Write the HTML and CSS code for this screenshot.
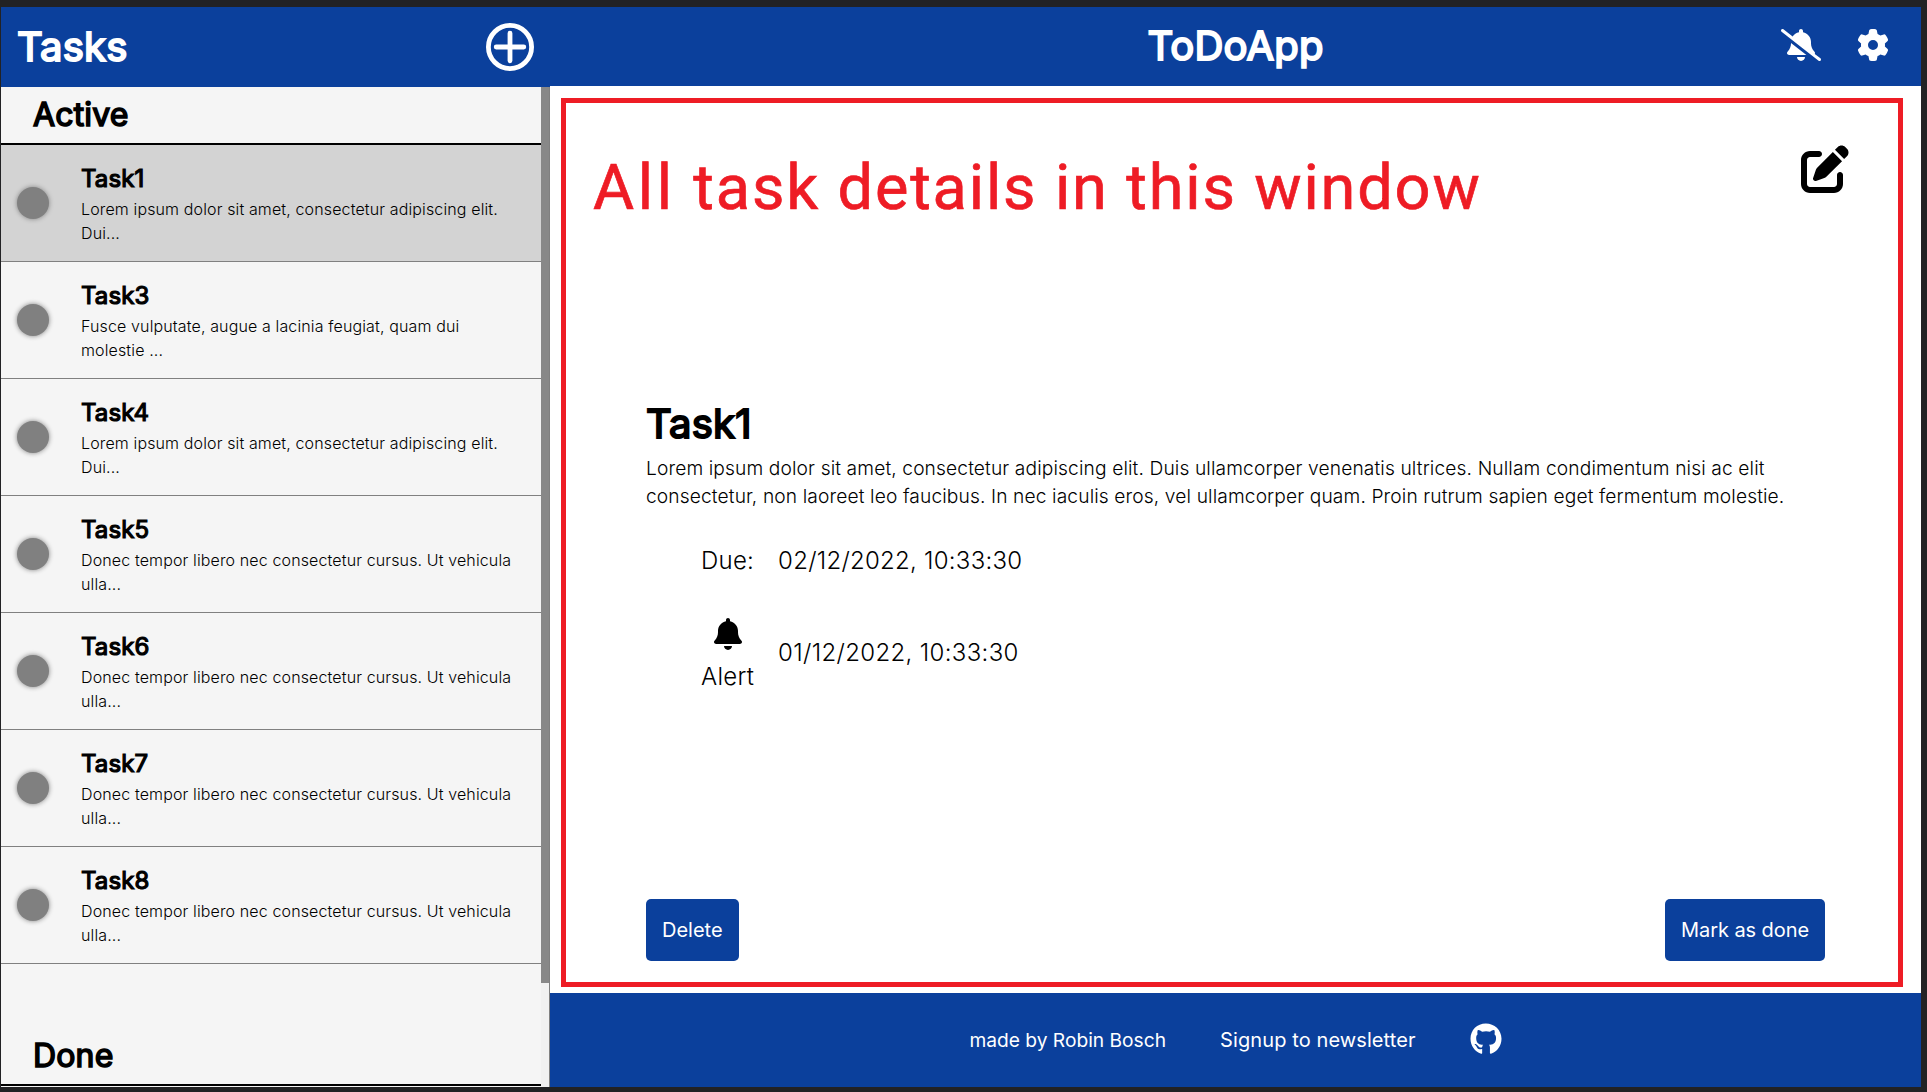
FILE: index.html
```
<!DOCTYPE html>
<html lang="en">
<head>
<meta charset="utf-8">
<title>ToDoApp</title>
<link rel="stylesheet" href="styles.css">
</head>
<body>
<div class="app">
  <aside class="sidebar">
    <header class="sidebar-header">
      <h1 class="title">Tasks</h1>
      <svg class="add" viewBox="0 0 48 48"><circle cx="24" cy="24" r="21.6"/><path d="M24 10.2v27.6M10.2 24h27.6"/></svg>
    </header>
    <div class="sidebar-body">
      <div class="lists">
        <h2 class="group">Active</h2>
        <div class="task selected"><i class="dot"></i><div class="info"><h3>Task1</h3><p>Lorem ipsum dolor sit amet, consectetur adipiscing elit. Dui...</p></div></div>
        <div class="task"><i class="dot"></i><div class="info"><h3>Task3</h3><p>Fusce vulputate, augue a lacinia feugiat, quam dui molestie ...</p></div></div>
        <div class="task"><i class="dot"></i><div class="info"><h3>Task4</h3><p>Lorem ipsum dolor sit amet, consectetur adipiscing elit. Dui...</p></div></div>
        <div class="task"><i class="dot"></i><div class="info"><h3>Task5</h3><p>Donec tempor libero nec consectetur cursus. Ut vehicula ulla...</p></div></div>
        <div class="task"><i class="dot"></i><div class="info"><h3>Task6</h3><p>Donec tempor libero nec consectetur cursus. Ut vehicula ulla...</p></div></div>
        <div class="task"><i class="dot"></i><div class="info"><h3>Task7</h3><p>Donec tempor libero nec consectetur cursus. Ut vehicula ulla...</p></div></div>
        <div class="task"><i class="dot"></i><div class="info"><h3>Task8</h3><p>Donec tempor libero nec consectetur cursus. Ut vehicula ulla...</p></div></div>
        <h2 class="group done">Done</h2>
      </div>
      <div class="scrollbar"><div class="thumb"></div></div>
    </div>
  </aside>
  <main class="main">
    <header class="topbar">
      <h1 class="title">ToDoApp</h1>
      <div class="actions">
        <svg width="40" height="32" viewBox="0 0 640 512"><path d="M38.8 5.1C28.4-3.1 13.3-1.2 5.1 9.2S-1.2 34.7 9.2 42.9l592 464c10.4 8.2 25.5 6.3 33.7-4.1s6.3-25.5-4.1-33.7l-90.2-70.7c.2-.4 .4-.9 .6-1.3c5.2-11.5 3.1-25-5.3-34.4l-7.4-8.3C497.3 319.2 480 273.9 480 226.8V208c0-77.4-55-142-128-156.8V32c0-17.7-14.3-32-32-32s-32 14.3-32 32V51.2c-42.6 8.6-79 34.2-102 69.3L38.8 5.1zM406.2 416L160 222.1v4.8c0 47-17.3 92.4-48.5 127.6l-7.4 8.3c-8.4 9.4-10.4 22.9-5.3 34.4S115.4 416 128 416H406.2zm-40.9 77.3c12-12 18.7-28.3 18.7-45.3H320 256c0 17 6.7 33.3 18.7 45.3s28.3 18.7 45.3 18.7s33.3-6.7 45.3-18.7z"/></svg>
        <svg width="32" height="32" viewBox="0 0 512 512"><path d="M495.9 166.6c3.2 8.7 .5 18.4-6.4 24.6l-43.3 39.4c1.1 8.3 1.7 16.8 1.7 25.4s-.6 17.1-1.7 25.4l43.3 39.4c6.9 6.2 9.6 15.9 6.4 24.6c-4.4 11.9-9.7 23.3-15.8 34.3l-4.7 8.1c-6.6 11-14 21.4-22.1 31.2c-5.9 7.2-15.7 9.6-24.5 6.8l-55.7-17.7c-13.4 10.3-28.2 18.9-44 25.4l-12.5 57.1c-2 9.1-9 16.3-18.2 17.8c-13.8 2.3-28 3.5-42.5 3.5s-28.7-1.2-42.5-3.5c-9.2-1.5-16.2-8.7-18.2-17.8l-12.5-57.1c-15.8-6.5-30.6-15.1-44-25.4L83.1 425.9c-8.8 2.8-18.6 .3-24.5-6.8c-8.1-9.8-15.5-20.2-22.1-31.2l-4.7-8.1c-6.1-11-11.4-22.4-15.8-34.3c-3.2-8.7-.5-18.4 6.4-24.6l43.3-39.4C64.6 273.1 64 264.6 64 256s.6-17.1 1.7-25.4L22.4 191.2c-6.9-6.2-9.6-15.9-6.4-24.6c4.4-11.9 9.7-23.3 15.8-34.3l4.7-8.1c6.6-11 14-21.4 22.1-31.2c5.9-7.2 15.7-9.6 24.5-6.8l55.7 17.7c13.4-10.3 28.2-18.9 44-25.4l12.5-57.1c2-9.1 9-16.3 18.2-17.8C227.3 1.2 241.5 0 256 0s28.7 1.2 42.5 3.5c9.2 1.5 16.2 8.7 18.2 17.8l12.5 57.1c15.8 6.5 30.6 15.1 44 25.4l55.7-17.7c8.8-2.8 18.6-.3 24.5 6.8c8.1 9.8 15.5 20.2 22.1 31.2l4.7 8.1c6.1 11 11.4 22.4 15.8 34.3zM256 336a80 80 0 1 0 0-160 80 80 0 1 0 0 160z"/></svg>
      </div>
    </header>
    <section class="stage">
      <div class="panel">
        <div class="panel-top">
          <p class="note"><span class="wide">All</span> task details in this window</p>
          <svg class="edit" viewBox="0 0 512 512"><path d="M471.6 21.7c-21.9-21.9-57.3-21.9-79.2 0L362.3 51.7l97.9 97.9 30.1-30.1c21.9-21.9 21.9-57.3 0-79.2L471.6 21.7zm-299.2 220c-6.1 6.1-10.8 13.6-13.5 21.9l-29.6 88.8c-2.9 8.6-.6 18.1 5.8 24.6s15.9 8.7 24.6 5.8l88.8-29.6c8.2-2.7 15.7-7.4 21.9-13.5L437.7 172.3 339.7 74.3 172.4 241.7zM96 64C43 64 0 107 0 160V416c0 53 43 96 96 96H352c53 0 96-43 96-96V320c0-17.7-14.3-32-32-32s-32 14.3-32 32v96c0 17.7-14.3 32-32 32H96c-17.7 0-32-14.3-32-32V160c0-17.7 14.3-32 32-32h96c17.7 0 32-14.3 32-32s-14.3-32-32-32H96z"/></svg>
        </div>
        <div class="detail">
          <h2>Task1</h2>
          <p class="desc">Lorem ipsum dolor sit amet, consectetur adipiscing elit. Duis ullamcorper venenatis ultrices. Nullam condimentum nisi ac elit<br>consectetur, non laoreet leo faucibus. In nec iaculis eros, vel ullamcorper quam. Proin rutrum sapien eget fermentum molestie.</p>
          <div class="dates">
            <span class="label">Due:</span><span>02/12/2022, 10:33:30</span>
            <span class="label alert"><svg width="28" height="32" viewBox="0 0 448 512"><path d="M224 0c-17.7 0-32 14.3-32 32V51.2C119 66 64 130.6 64 208v18.8c0 47-17.3 92.4-48.5 127.6l-7.4 8.3c-8.4 9.4-10.4 22.9-5.3 34.4S19.4 416 32 416H416c12.6 0 24-7.4 29.2-18.9s3.1-25-5.3-34.4l-7.4-8.3C401.3 319.2 384 273.9 384 226.8V208c0-77.4-55-142-128-156.8V32c0-17.7-14.3-32-32-32zm45.3 493.3c12-12 18.7-28.3 18.7-45.3H224 160c0 17 6.7 33.3 18.7 45.3s28.3 18.7 45.3 18.7s33.3-6.7 45.3-18.7z"/></svg><span>Alert</span></span><span class="alert-date">01/12/2022, 10:33:30</span>
          </div>
        </div>
        <div class="buttons"><button>Delete</button><button class="mark">Mark as done</button></div>
      </div>
    </section>
    <footer class="footer">
      <span class="author">made by Robin Bosch</span><span class="signup">Signup to newsletter</span>
      <svg width="32" height="32" viewBox="0 0 496 512"><path d="M165.9 397.4c0 2-2.3 3.6-5.2 3.6-3.3.3-5.6-1.3-5.6-3.6 0-2 2.3-3.6 5.2-3.6 3-.3 5.6 1.3 5.6 3.6zm-31.1-4.5c-.7 2 1.3 4.3 4.3 4.9 2.6 1 5.6 0 6.2-2s-1.3-4.3-4.3-5.2c-2.6-.7-5.5.3-6.2 2.3zm44.2-1.7c-2.9.7-4.9 2.6-4.6 4.9.3 2 2.9 3.3 5.9 2.6 2.9-.7 4.9-2.6 4.6-4.6-.3-1.9-3-3.2-5.9-2.9zM244.8 8C106.1 8 0 113.3 0 252c0 110.9 69.8 205.8 169.5 239.2 12.8 2.3 17.3-5.6 17.3-12.1 0-6.2-.3-40.4-.3-61.4 0 0-70 15-84.7-29.8 0 0-11.4-29.1-27.8-36.6 0 0-22.9-15.7 1.6-15.4 0 0 24.9 2 38.6 25.8 21.9 38.6 58.6 27.5 72.9 20.9 2.3-16 8.8-27.1 16-33.7-55.9-6.2-112.3-14.3-112.3-110.5 0-27.5 7.6-41.3 23.6-58.9-2.6-6.5-11.1-33.3 2.6-67.9 20.9-6.5 69 27 69 27 20-5.6 41.5-8.5 62.8-8.5s42.8 2.9 62.8 8.5c0 0 48.1-33.6 69-27 13.7 34.7 5.2 61.4 2.6 67.9 16 17.7 25.8 31.5 25.8 58.9 0 96.5-58.9 104.2-114.8 110.5 9.2 7.9 17 22.9 17 46.4 0 33.7-.3 75.4-.3 83.6 0 6.5 4.6 14.4 17.3 12.1C428.2 457.8 496 362.9 496 252 496 113.3 383.5 8 244.8 8z"/></svg>
    </footer>
  </main>
</div>
</body>
</html>
```
FILE: styles.css
```
* { box-sizing: border-box; margin: 0; padding: 0; }
body { width: 1927px; height: 1092px; padding: 7px 6px 5px 1px; background: #222224; font-family: Inter, "Liberation Sans", sans-serif; font-weight: 300; color: #000; overflow: hidden; }
svg { display: block; fill: currentColor; }
h1, h2, h3 { font-weight: 400; letter-spacing: .005em; -webkit-text-stroke: .05em currentColor; }
.app { display: flex; height: 1080px; background: #fff; }
.sidebar { width: 549px; display: flex; flex-direction: column; background: #f5f5f5; }
.sidebar-header { height: 80px; background: #0b409c; color: #fff; display: flex; align-items: center; justify-content: space-between; padding: 0 16px; }
.title { font-size: 40px; line-height: 48px; }
.add { width: 48px; height: 48px; fill: none; stroke: #fff; stroke-width: 4.8; stroke-linecap: round; }
.sidebar-body { flex: 1; display: flex; border-right: 1px solid gray; }
.lists { flex: 1; display: flex; flex-direction: column; }
.group { height: 58px; padding: 8px 32px 0; border-bottom: 2px solid #000; font-size: 32px; line-height: 39px; }
.done { margin-top: auto; margin-bottom: 1px; }
.task { height: 117px; border-bottom: 1px solid gray; display: flex; align-items: center; padding: 0 16px; gap: 32px; }
.selected { background: #d3d3d3; }
.dot { flex: none; width: 32px; height: 32px; border-radius: 50%; background: gray; box-shadow: 0 0 5px gray; }
.info { padding-top: 2px; }
.info h3 { font-size: 24px; line-height: 29px; }
.info p { font-size: 16px; line-height: 24px; margin-top: 4px; letter-spacing: .13px; }
.scrollbar { width: 8px; background: #f1f1f1; }
.thumb { height: 896px; background: #888; }
.main { flex: 1; display: flex; flex-direction: column; }
.topbar { height: 79px; background: #0b409c; color: #fff; display: grid; grid-template-columns: 1fr auto 1fr; align-items: center; padding: 0 32px 3px; }
.topbar .title { grid-column: 2; padding-top: 2px; }
.actions { display: flex; justify-content: flex-end; gap: 36.5px; }
.stage { flex: 1; padding: 12px 18px 6px 11px; }
.panel { height: 100%; border: 5px solid #ee1c25; display: flex; flex-direction: column; padding: 0 73px 21px 80px; }
.panel-top { height: 240px; display: flex; justify-content: space-between; padding-top: 42px; }
.note { margin: 1px 0 0 -53px; color: #ee1c25; font: 400 63px/84px Roboto, sans-serif; letter-spacing: 1.85px; -webkit-text-stroke: .7px currentColor; }
.wide { letter-spacing: 3.7px; }
.edit { width: 48px; height: 48px; margin-right: -24px; }
.detail { flex: 1; padding-top: 56px; }
.detail h2 { font-size: 40px; line-height: 50px; margin-bottom: 5px; }
.desc { font-size: 19.2px; line-height: 28px; letter-spacing: .12px; white-space: nowrap; }
.dates { display: grid; grid-template-columns: auto 1fr; column-gap: 24px; row-gap: 40px; font-size: 24px; line-height: 29px; letter-spacing: .25px; align-items: center; padding: 36px 0 0 55px; }
.label { display: flex; flex-direction: column; align-items: center; }
.alert { padding-top: 3px; gap: 12px; }
.alert-date { padding-bottom: 2px; letter-spacing: .33px; }
.buttons { display: flex; justify-content: space-between; }
button { height: 62px; padding: 0 16px; border: 0; border-radius: 5px; background: #0b409c; color: #fff; font: 400 20px Inter, sans-serif; }
.mark { letter-spacing: -.08px; }
.footer { height: 94px; padding-bottom: 2px; background: #0b409c; color: #fff; display: flex; align-items: center; justify-content: center; gap: 54px; font-size: 20px; font-weight: 400; }
.footer span { padding-top: 2px; }
.author { font-size: 19.2px; }
.signup { letter-spacing: .1px; }
```
